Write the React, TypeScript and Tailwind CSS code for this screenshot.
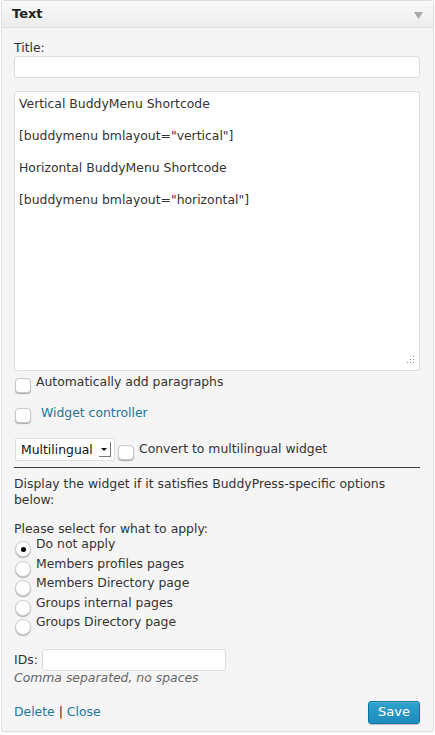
import React from 'react';

const font = "font-['DejaVu_Sans','Liberation_Sans',sans-serif]";

const Check: React.FC<{ className?: string }> = ({ className = '' }) => (
  <span
    className={`inline-block w-[16px] h-[15px] rounded-[4px] border border-[#c8c8c8] bg-white shadow-[0_1px_1px_rgba(0,0,0,0.3)] shrink-0 ${className}`}
  />
);

const Radio: React.FC<{ checked?: boolean }> = ({ checked }) => (
  <span className="relative inline-flex items-center justify-center w-[16px] h-[16px] rounded-full border border-[#d0d0d0] bg-white shadow-[0_1px_1px_rgba(0,0,0,0.3)] shrink-0 mt-[4px]">
    {checked && <span className="w-[5px] h-[5px] rounded-full bg-black" />}
  </span>
);

const OPTIONS = [
  'Do not apply',
  'Members profiles pages',
  'Members Directory page',
  'Groups internal pages',
  'Groups Directory page',
];

export default function App() {
  return (
    <div className={`w-[435px] h-[735px] bg-white overflow-hidden ${font} text-[12.4px] leading-[16px] text-[#333]`}>
      <div className="ml-px w-[433px] h-[732px] border border-[#dfdfdf] rounded-[3px] bg-[#f5f5f5] shadow-[0_1px_1px_rgba(0,0,0,0.04)] flex flex-col">
        {/* Header */}
        <div className="h-[27px] shrink-0 px-[10px] flex items-center justify-between bg-gradient-to-b from-[#f9f9f9] to-[#ececec] border-b border-[#dfdfdf]">
          <span className="font-bold text-[13px] text-[#222]">Text</span>
          <svg width="9" height="7" viewBox="0 0 9 7" className="mt-[2px]">
            <path d="M0 0h9L4.5 7z" fill="#a8a8a8" />
          </svg>
        </div>

        {/* Body */}
        <div className="flex-1 px-[12px] pt-[12px] flex flex-col">
          <label>Title:</label>
          <div className="h-[22px] w-[406px] border border-[#dddddd] rounded-[3px] bg-white" />

          <div className="relative mt-[13px] h-[280px] w-[406px] border border-[#dddddd] rounded-[3px] bg-white px-[4px] pt-[4px] text-[#333]">
            <p>Vertical BuddyMenu Shortcode</p>
            <p className="mt-[16px]">[buddymenu bmlayout="vertical"]</p>
            <p className="mt-[16px]">Horizontal BuddyMenu Shortcode</p>
            <p className="mt-[16px]">[buddymenu bmlayout="horizontal"]</p>
            <svg width="10" height="10" viewBox="0 0 10 10" className="absolute right-[4px] bottom-[4px]">
              <g fill="#8a8a8a">
                <rect x="8" y="0" width="1" height="1" />
                <rect x="5" y="3" width="1" height="1" />
                <rect x="8" y="3" width="1" height="1" />
                <rect x="2" y="6" width="1" height="1" />
                <rect x="5" y="6" width="1" height="1" />
                <rect x="8" y="6" width="1" height="1" />
              </g>
            </svg>
          </div>

          <div className="mt-[6px] flex items-start gap-[5px] pl-[1px]">
            <Check className="mt-[1px]" />
            <span className="mt-[-3px]">Automatically add paragraphs</span>
          </div>

          <div className="mt-[15px] flex items-start gap-[10px] pl-[1px]">
            <Check />
            <span className="mt-[-3px] text-[#21759b]">Widget controller</span>
          </div>

          <div className="mt-[15px] flex items-start pl-[1px]">
            <div className="h-[23px] w-[100px] border border-[#dddddd] rounded-[2px] bg-white flex items-center pl-[5px] text-[#111]">
              <span>Multilingual</span>
              <span className="ml-[6px] w-[12px] h-[15px] border-r border-b border-[#777] flex items-center justify-center">
                <svg width="6" height="3" viewBox="0 0 6 3">
                  <path d="M0 0h6L3 3z" fill="#111" />
                </svg>
              </span>
            </div>
            <Check className="ml-[3px] mt-[7px]" />
            <span className="ml-[5px] mt-[3px]">Convert to multilingual widget</span>
          </div>

          <div className="mt-[6px] w-[406px] border-t border-[#3a3a3a]" />

          <p className="mt-[8px] pr-[10px]">Display the widget if it satisfies BuddyPress-specific options below:</p>

          <p className="mt-[13px]">Please select for what to apply:</p>
          <div className="flex flex-col">
            {OPTIONS.map((o, i) => (
              <div key={o} className="flex items-start gap-[5px] pl-[1px] h-[19.5px]">
                <Radio checked={i === 0} />
                <span className="mt-[-1px]">{o}</span>
              </div>
            ))}
          </div>

          <div className="mt-[14px] flex items-center gap-[4px]">
            <span>IDs:</span>
            <div className="h-[22px] w-[184px] border border-[#dddddd] rounded-[3px] bg-white" />
          </div>
          <p className="mt-[-1px] italic text-[#666]">Comma separated, no spaces</p>

          <div className="mt-[15px] flex items-center justify-between w-[406px]">
            <div>
              <a className="text-[#21759b]">Delete</a>
              <span className="text-[#222]"> | </span>
              <a className="text-[#21759b]">Close</a>
            </div>
            <button className="h-[23px] w-[52px] rounded-[3px] border border-[#0074a2] bg-gradient-to-b from-[#2ea2cc] to-[#1e8cbe] text-white text-[13px] shadow-[inset_0_1px_0_rgba(120,200,230,0.5),0_1px_1px_rgba(0,0,0,0.2)]">
              Save
            </button>
          </div>
        </div>
      </div>
    </div>
  );
}
